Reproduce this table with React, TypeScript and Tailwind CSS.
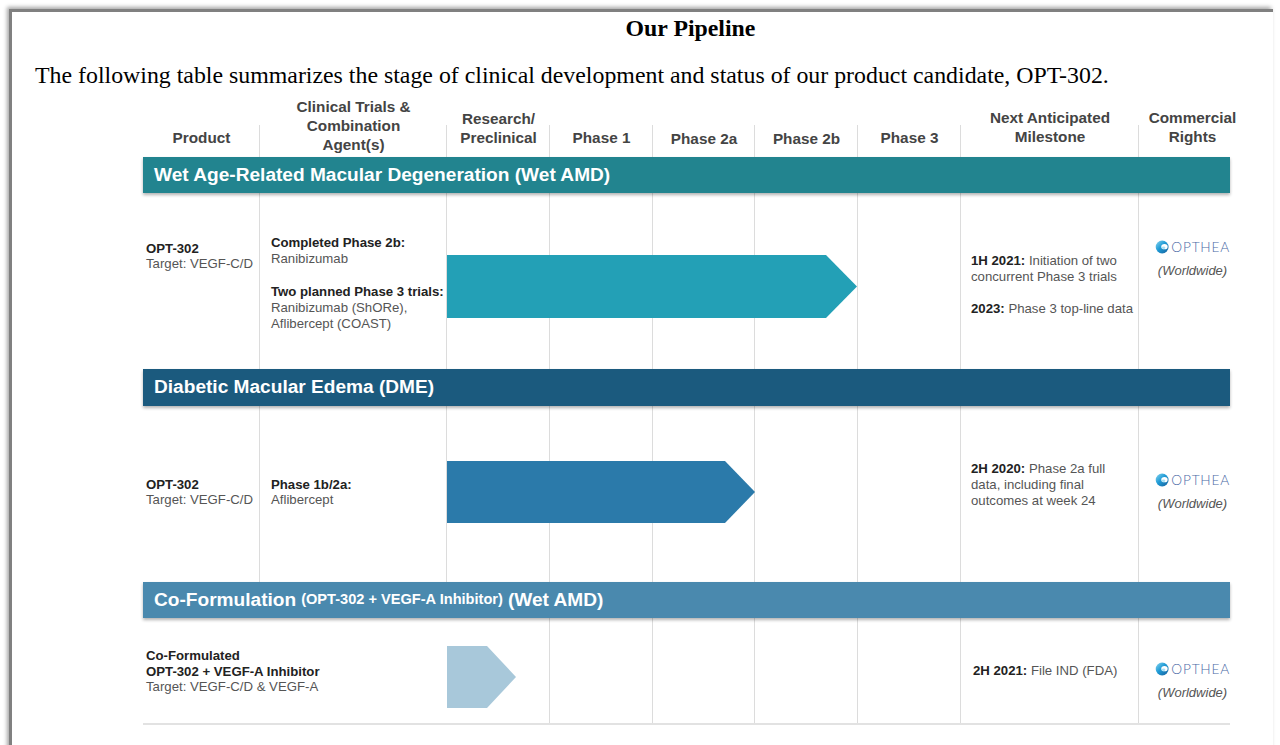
import React from "react";

const GRID =
  "grid grid-cols-[117px_187px_103px_103px_102px_103px_103px_178px_91px]";

function Arrow({ w, h, tip, color }: { w: number; h: number; tip: number; color: string }) {
  const b = w - tip;
  return (
    <svg width={w} height={h} viewBox={`0 0 ${w} ${h}`} className="block">
      <polygon points={`0,0 ${b},0 ${w},${h / 2} ${b},${h} 0,${h}`} fill={color} />
    </svg>
  );
}

function Logo() {
  return (
    <div className="flex items-center justify-center gap-[2px]">
      <svg width="16" height="16" viewBox="0 0 16 16" className="block">
        <defs>
          <linearGradient id="lg" x1="0" y1="0" x2="1" y2="1">
            <stop offset="0" stopColor="#8ad6f0" />
            <stop offset="0.45" stopColor="#1f9bd6" />
            <stop offset="1" stopColor="#155f9c" />
          </linearGradient>
        </defs>
        <circle cx="8" cy="8" r="7.2" fill="url(#lg)" />
        <ellipse cx="10.6" cy="7.6" rx="3.6" ry="3" fill="#ffffff" />
        <ellipse cx="9.6" cy="8.8" rx="2" ry="1.4" fill="#a8e0f5" />
      </svg>
      <span className="font-['Lato','Liberation_Sans',sans-serif] text-[13.7px] font-light tracking-[0.8px] text-[#4a6aa6] leading-[16px]">
        OPTHEA
      </span>
    </div>
  );
}

function Commercial({ pt }: { pt: string }) {
  return (
    <div className={`${pt} pl-[16px] text-center`}>
      <Logo />
      <div className="mt-[8px] text-[13px] italic leading-[15px] text-[#555]">(Worldwide)</div>
    </div>
  );
}

const lineCell = "border-r border-[#dcdcdc]";

function Header() {
  const cells: { lines: string[]; pb: string }[] = [
    { lines: ["Product"], pb: "pb-[10px]" },
    { lines: ["Clinical Trials &", "Combination", "Agent(s)"], pb: "pb-[3px]" },
    { lines: ["Research/", "Preclinical"], pb: "pb-[10px]" },
    { lines: ["Phase 1"], pb: "pb-[10px]" },
    { lines: ["Phase 2a"], pb: "pb-[9px]" },
    { lines: ["Phase 2b"], pb: "pb-[9px]" },
    { lines: ["Phase 3"], pb: "pb-[10px]" },
    { lines: ["Next Anticipated", "Milestone"], pb: "pb-[11px]" },
    { lines: ["Commercial", "Rights"], pb: "pb-[11px]" },
  ];
  const colStart = [
    "col-start-1",
    "col-start-2",
    "col-start-3",
    "col-start-4",
    "col-start-5",
    "col-start-6",
    "col-start-7",
    "col-start-8",
    "col-start-9",
  ];
  return (
    <div className={`${GRID} grid-rows-[28px_32px]`}>
      {cells.map((c, i) =>
        i < 8 ? <div key={"l" + i} className={`${colStart[i]} row-start-2 ${lineCell}`} /> : null
      )}
      {cells.map((c, i) => (
        <div
          key={"t" + i}
          className={`${colStart[i]} row-start-1 row-span-2 flex flex-col justify-end items-center text-center ${c.pb} text-[15.3px] font-bold leading-[19px] text-[#444] ${i === 8 ? "pl-[16px]" : ""}`}
        >
          {c.lines.map((l) => (
            <div key={l} className="whitespace-nowrap">
              {l}
            </div>
          ))}
        </div>
      ))}
    </div>
  );
}

function Band({ color, h, children }: { color: string; h: string; children: React.ReactNode }) {
  return (
    <div
      className={`${color} ${h} relative z-10 flex items-center pl-[11px] text-white font-bold text-[19.1px] shadow-[0_2px_3px_rgba(0,0,0,0.3)] whitespace-nowrap`}
    >
      {children}
    </div>
  );
}

const B = ({ children }: { children: React.ReactNode }) => (
  <span className="font-bold text-[#222]">{children}</span>
);

export default function App() {
  return (
    <div className="w-[1280px] h-[745px] overflow-hidden bg-white font-['Liberation_Sans',Arial,sans-serif]">
      <div className="ml-[9px] mt-[9px] w-[1264px] h-[760px] border-t-[3px] border-l-[3px] border-[#808080] shadow-[-2px_-2px_4px_rgba(0,0,0,0.35)]">
        <div className="font-['Liberation_Serif','Times_New_Roman',serif] text-black">
          <div className="mt-[3px] pl-[96px] text-center text-[23.8px] font-bold leading-[26px]">
            Our Pipeline
          </div>
          <div className="mt-[21px] pl-[23px] text-[23.85px] leading-[26px] whitespace-nowrap">
            The following table summarizes the stage of clinical development and status of our
            product candidate, OPT-302.
          </div>
        </div>

        <div className="ml-[131px] mt-[9px] w-[1087px]">
          <Header />

          <Band color="bg-[#22848f]" h="h-[36px]">
            Wet Age-Related Macular Degeneration (Wet AMD)
          </Band>

          {/* Row 1 */}
          <div className={`${GRID} h-[176px] text-[13.2px] leading-[16px] text-[#555]`}>
            <div className={`col-start-1 row-start-1 ${lineCell} pt-[48px] pl-[3px] leading-[15px]`}>
              <div><B>OPT-302</B></div>
              <div className="whitespace-nowrap">Target: VEGF-C/D</div>
            </div>
            <div className={`col-start-2 row-start-1 ${lineCell} pt-[42px] pl-[11px]`}>
              <div><B>Completed Phase 2b:</B></div>
              <div>Ranibizumab</div>
              <div className="mt-[17px] whitespace-nowrap"><B>Two planned Phase 3 trials:</B></div>
              <div>Ranibizumab (ShORe),</div>
              <div>Aflibercept (COAST)</div>
            </div>
            <div className={`col-start-3 row-start-1 ${lineCell}`} />
            <div className={`col-start-4 row-start-1 ${lineCell}`} />
            <div className={`col-start-5 row-start-1 ${lineCell}`} />
            <div className={`col-start-6 row-start-1 ${lineCell}`} />
            <div className={`col-start-7 row-start-1 ${lineCell}`} />
            <div className={`col-start-8 row-start-1 ${lineCell} pt-[60px] pl-[10px] whitespace-nowrap`}>
              <div><B>1H 2021:</B> Initiation of two</div>
              <div>concurrent Phase 3 trials</div>
              <div className="mt-[16px]"><B>2023:</B> Phase 3 top-line data</div>
            </div>
            <div className="col-start-9 row-start-1">
              <Commercial pt="pt-[46px]" />
            </div>
            <div className="col-start-3 col-end-8 row-start-1 pt-[62px]">
              <Arrow w={410} h={63} tip={31} color="#23a0b6" />
            </div>
          </div>

          <Band color="bg-[#1b5a7e]" h="h-[37px]">
            Diabetic Macular Edema (DME)
          </Band>

          {/* Row 2 */}
          <div className={`${GRID} h-[176px] text-[13.2px] leading-[16px] text-[#555]`}>
            <div className={`col-start-1 row-start-1 ${lineCell} pt-[71px] pl-[3px] leading-[15px]`}>
              <div><B>OPT-302</B></div>
              <div className="whitespace-nowrap">Target: VEGF-C/D</div>
            </div>
            <div className={`col-start-2 row-start-1 ${lineCell} pt-[71px] pl-[11px] leading-[15px]`}>
              <div><B>Phase 1b/2a:</B></div>
              <div>Aflibercept</div>
            </div>
            <div className={`col-start-3 row-start-1 ${lineCell}`} />
            <div className={`col-start-4 row-start-1 ${lineCell}`} />
            <div className={`col-start-5 row-start-1 ${lineCell}`} />
            <div className={`col-start-6 row-start-1 ${lineCell}`} />
            <div className={`col-start-7 row-start-1 ${lineCell}`} />
            <div className={`col-start-8 row-start-1 ${lineCell} pt-[55px] pl-[10px] whitespace-nowrap`}>
              <div><B>2H 2020:</B> Phase 2a full</div>
              <div>data, including final</div>
              <div>outcomes at week 24</div>
            </div>
            <div className="col-start-9 row-start-1">
              <Commercial pt="pt-[66px]" />
            </div>
            <div className="col-start-3 col-end-8 row-start-1 pt-[55px]">
              <Arrow w={308} h={62} tip={30} color="#2b7aaa" />
            </div>
          </div>

          <Band color="bg-[#4a89ae]" h="h-[36px]">
            Co-Formulation <span className="ml-[5px] text-[14.6px]">(OPT-302 + VEGF-A Inhibitor)</span>
            <span className="ml-[5px]">(Wet AMD)</span>
          </Band>

          {/* Row 3 */}
          <div className={`${GRID} h-[107px] border-b-2 border-[#e2e2e2] text-[13.2px] leading-[15.5px] text-[#555]`}>
            <div className="col-start-1 col-end-3 row-start-1 pt-[30px] pl-[3px] whitespace-nowrap">
              <div><B>Co-Formulated</B></div>
              <div><B>OPT-302 + VEGF-A Inhibitor</B></div>
              <div>Target: VEGF-C/D &amp; VEGF-A</div>
            </div>
            <div className={`col-start-3 row-start-1 ${lineCell}`} />
            <div className={`col-start-4 row-start-1 ${lineCell}`} />
            <div className={`col-start-5 row-start-1 ${lineCell}`} />
            <div className={`col-start-6 row-start-1 ${lineCell}`} />
            <div className={`col-start-7 row-start-1 ${lineCell}`} />
            <div className={`col-start-8 row-start-1 ${lineCell} pt-[45px] pl-[12px] whitespace-nowrap`}>
              <div><B>2H 2021:</B> File IND (FDA)</div>
            </div>
            <div className="col-start-9 row-start-1">
              <Commercial pt="pt-[43px]" />
            </div>
            <div className="col-start-3 col-end-8 row-start-1 pt-[28px]">
              <Arrow w={69} h={62} tip={29} color="#a8c8da" />
            </div>
          </div>
        </div>
      </div>
    </div>
  );
}
